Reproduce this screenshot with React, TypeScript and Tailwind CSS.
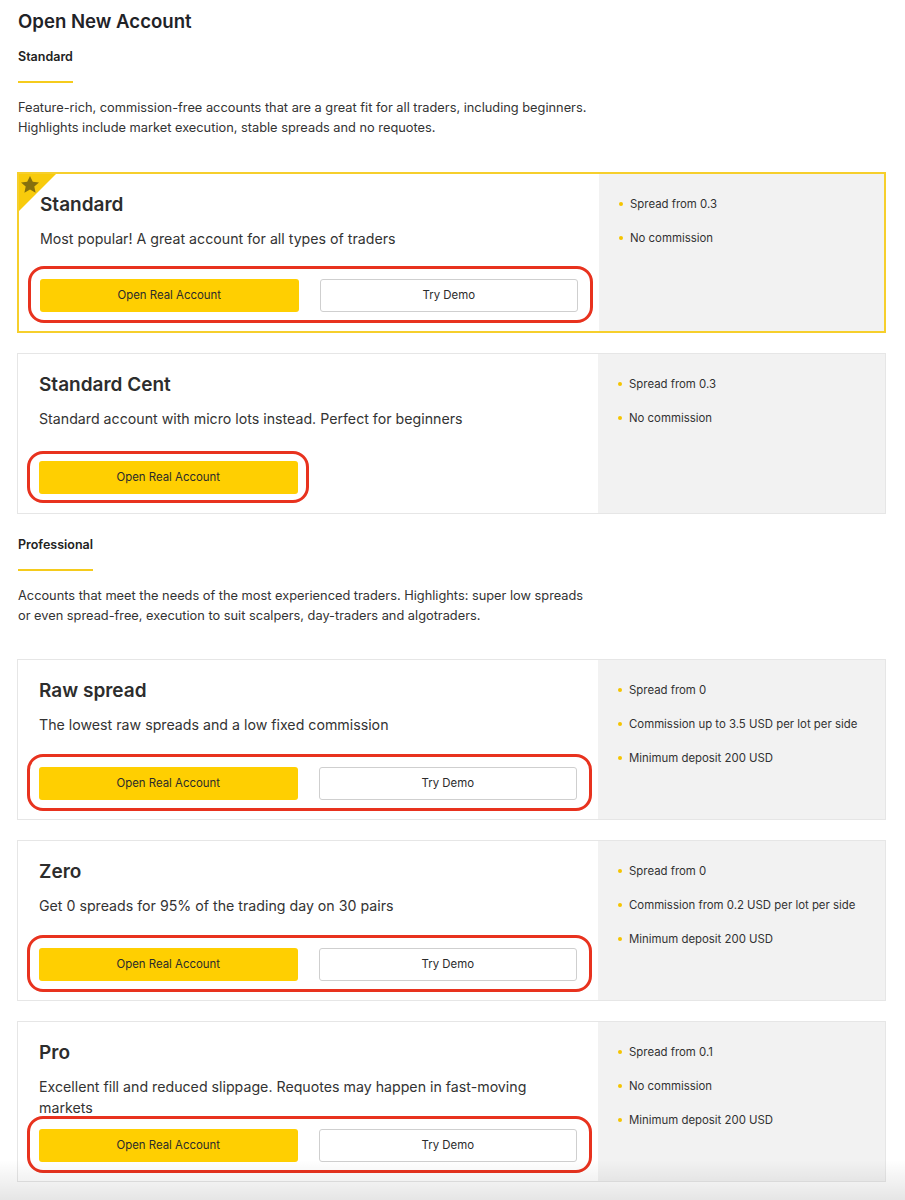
import React from 'react';

interface Account {
  name: string;
  description: string;
  features: string[];
  demo: boolean;
  featured?: boolean;
}

const standardAccounts: Account[] = [
  {
    name: 'Standard',
    description: 'Most popular! A great account for all types of traders',
    features: ['Spread from 0.3', 'No commission'],
    demo: true,
    featured: true,
  },
  {
    name: 'Standard Cent',
    description: 'Standard account with micro lots instead. Perfect for beginners',
    features: ['Spread from 0.3', 'No commission'],
    demo: false,
  },
];

const proAccounts: Account[] = [
  {
    name: 'Raw spread',
    description: 'The lowest raw spreads and a low fixed commission',
    features: ['Spread from 0', 'Commission up to 3.5 USD per lot per side', 'Minimum deposit 200 USD'],
    demo: true,
  },
  {
    name: 'Zero',
    description: 'Get 0 spreads for 95% of the trading day on 30 pairs',
    features: ['Spread from 0', 'Commission from 0.2 USD per lot per side', 'Minimum deposit 200 USD'],
    demo: true,
  },
  {
    name: 'Pro',
    description: 'Excellent fill and reduced slippage. Requotes may happen in fast-moving markets',
    features: ['Spread from 0.1', 'No commission', 'Minimum deposit 200 USD'],
    demo: true,
  },
];

const SectionHeader: React.FC<{ label: string; text: React.ReactNode }> = ({ label, text }) => (
  <div>
    <span className="block w-fit border-b-2 border-[#f5cb1c] pb-[16px] text-[12.5px] leading-4 font-semibold text-[#222]">
      {label}
    </span>
    <p className="mt-[15px] text-[12.8px] leading-5 text-[#333]">{text}</p>
  </div>
);

const AccountCard: React.FC<{ account: Account }> = ({ account }) => (
  <div
    className={
      'relative flex h-[161px] ' +
      (account.featured ? 'border-2 border-[#f6cf2c]' : 'border border-[#e6e6e6]')
    }
  >
    {account.featured && (
      <div className="absolute left-0 top-0 h-[37px] w-[37px]">
        <svg viewBox="0 0 37 37" className="h-full w-full">
          <polygon points="0,0 37,0 0,37" fill="#f8cb0c" />
          <polygon
            points="11,2 13.8,7.8 20,8.4 15.3,12.6 16.6,18.8 11,15.6 5.4,18.8 6.7,12.6 2,8.4 8.2,7.8"
            fill="#86700e"
          />
        </svg>
      </div>
    )}
    <div className="flex w-[580px] flex-col bg-white px-[21px] pt-[19px] pb-[19px]">
      <h3 className="text-[19px] leading-6 font-semibold text-[#2d2d2d]">{account.name}</h3>
      <p className="mt-[11px] text-[14.2px] leading-[21px] text-[#333]">{account.description}</p>
      <div className="relative mt-auto grid grid-cols-2 gap-[21px]">
        {account.demo ? (
          <div className="pointer-events-none absolute -left-[12px] -right-[15px] -top-[13px] -bottom-[11px] rounded-[16px] border-[3px] border-[#e8321e]" />
        ) : (
          <div className="pointer-events-none absolute -left-[12px] right-[calc(50%-1px)] -top-[10px] -bottom-[9px] rounded-[16px] border-[3px] border-[#e8321e]" />
        )}
        <button className="h-[33px] rounded-[3px] bg-[#ffcf01] text-[11.4px] text-[#2b2b2b]">Open Real Account</button>
        {account.demo && (
          <button className="h-[33px] rounded-[3px] border border-[#cfcfcf] bg-white text-[11.4px] text-[#2b2b2b]">
            Try Demo
          </button>
        )}
      </div>
    </div>
    <div className="flex-1 bg-[#f2f2f2] pl-[20px] pt-[22px]">
      <ul className="flex flex-col gap-[18px]">
        {account.features.map((f) => (
          <li key={f} className="flex items-center text-[11.4px] leading-4 text-[#333]">
            <span className="mr-[7px] h-[4px] w-[4px] rounded-full bg-[#f5c400]" />
            {f}
          </li>
        ))}
      </ul>
    </div>
  </div>
);

export default function App() {
  return (
    <div
      className="relative min-h-[1200px] overflow-hidden bg-white pl-[17px] pr-[19px]"
      style={{ fontFamily: 'Inter, "Noto Sans", Arial, sans-serif' }}
    >
      <h1 className="pl-[1px] pt-[9px] text-[18.6px] leading-6 font-semibold text-[#1f2328]">Open New Account</h1>
      <div className="mt-[16px] pl-[1px]">
        <SectionHeader
          label="Standard"
          text={
            <>
              Feature-rich, commission-free accounts that are a great fit for all traders, including beginners.
              <br />
              Highlights include market execution, stable spreads and no requotes.
            </>
          }
        />
      </div>
      <div className="mt-[34px] flex flex-col gap-[20px]">
        {standardAccounts.map((a) => (
          <AccountCard key={a.name} account={a} />
        ))}
      </div>
      <div className="mt-[23px] pl-[1px]">
        <SectionHeader
          label="Professional"
          text={
            <>
              Accounts that meet the needs of the most experienced traders. Highlights: super low spreads
              <br />
              or even spread-free, execution to suit scalpers, day-traders and algotraders.
            </>
          }
        />
      </div>
      <div className="mt-[33px] flex flex-col gap-[20px]">
        {proAccounts.map((a) => (
          <AccountCard key={a.name} account={a} />
        ))}
      </div>
      <div className="pointer-events-none absolute bottom-0 left-0 right-0 h-[40px] bg-gradient-to-b from-transparent to-black/10" />
    </div>
  );
}
